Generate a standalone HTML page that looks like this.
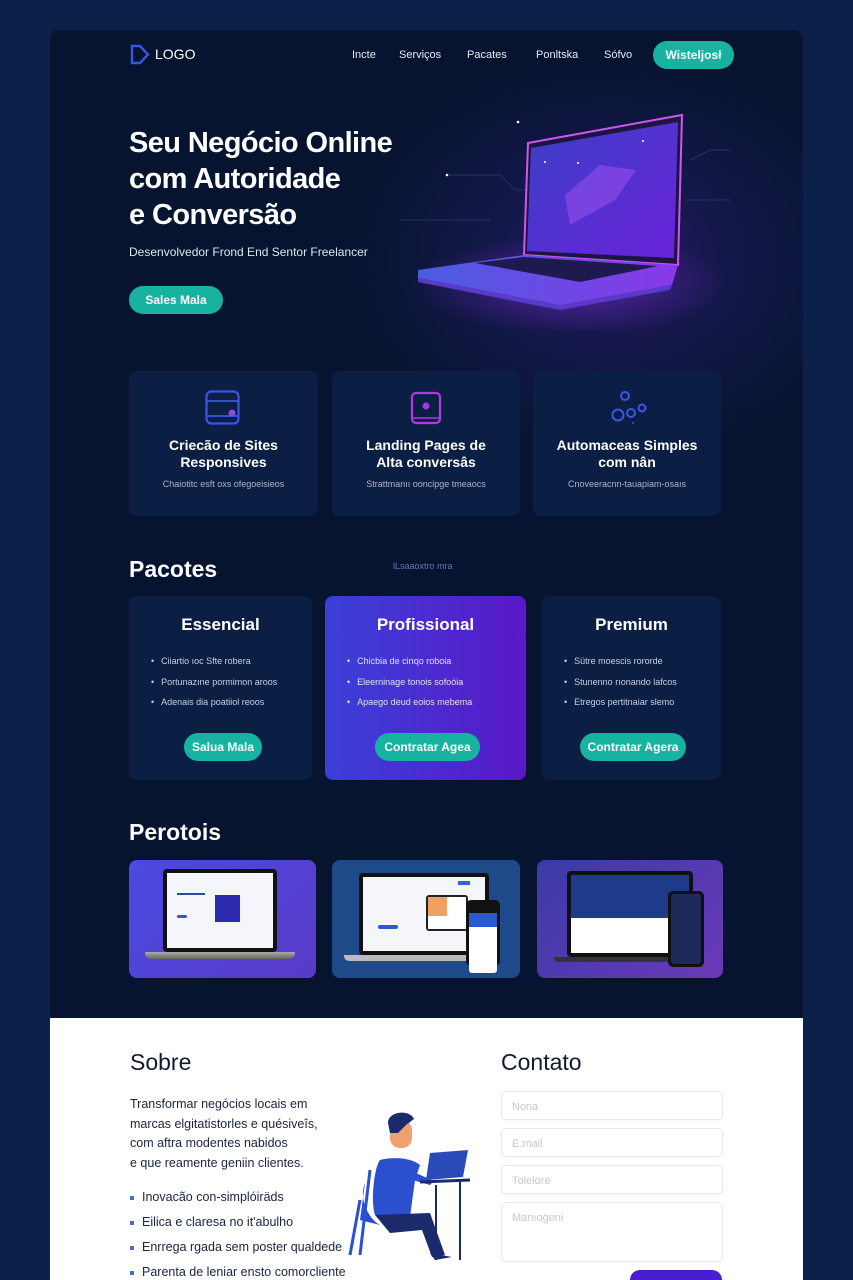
<!DOCTYPE html>
<html><head><meta charset="utf-8"><style>
*{margin:0;padding:0;box-sizing:border-box}
html,body{width:853px;height:1280px;overflow:hidden}
body{background:#0b2149;font-family:"Liberation Sans",sans-serif;position:relative}
.a{position:absolute}
.panel{left:50px;top:30px;width:753px;height:990px;background:radial-gradient(ellipse 260px 200px at 560px 230px,#2a1a6a 0%,#14184a 45%,rgba(7,19,46,0) 100%),#061430;border-radius:8px 8px 0 0}
.w{color:#fff}
.nav{font-size:11px;color:#e6e9f2;top:49px}
.btn{background:#17b3a0;color:#fff;font-weight:bold;border-radius:16px;text-align:center;font-size:12px}
.card{background:#0b1e44;border-radius:8px}
.ct{font-size:14px;font-weight:bold;color:#fff;text-align:center;line-height:17px}
.cs{font-size:9px;color:#aab3c8;text-align:center}
.pt{font-size:17px;font-weight:bold;color:#fff;text-align:center}
.li{font-size:9px;color:#c8cfe0;line-height:20.5px;padding-left:22px}
.li span{display:block}
.li span:before{content:"•";margin-right:7px}
.white{left:50px;top:1018px;width:753px;height:262px;background:#fff}
.inp{left:501px;width:222px;border:1px solid #e6e9ef;border-radius:5px;font-size:11px;color:#c4c8d0;padding:9px 10px;box-shadow:0 1px 3px rgba(0,0,0,.04)}
.bl{font-size:12.5px;color:#1a2440;left:130px}
.bl:before{content:"";display:inline-block;width:4px;height:4px;background:#4a6ad0;margin-right:8px;vertical-align:middle}
</style></head><body>
<div class="a panel"></div>
<svg class="a" style="left:130px;top:44px" width="20" height="21"><path d="M2 2 L10 2 L18 10.5 L10 19 L2 19 Z" fill="none" stroke="#3a55e0" stroke-width="2.4"/></svg>
<div class="a w" style="left:155px;top:46px;font-size:14px">LOGO</div>
<div class="a nav" style="left:352px">Incte</div>
<div class="a nav" style="left:399px">Serviços</div>
<div class="a nav" style="left:467px">Pacates</div>
<div class="a nav" style="left:536px">Ponltska</div>
<div class="a nav" style="left:604px">Sófvo</div>
<div class="a btn" style="left:653px;top:41px;width:81px;height:28px;line-height:28px">Wisteljosł</div>
<div class="a w" style="left:129px;top:125px;font-size:29px;font-weight:bold;line-height:36px;letter-spacing:-0.6px">Seu Negócio Online<br>com Autoridade<br>e Conversão</div>
<div class="a" style="left:129px;top:245px;font-size:12px;color:#e0e4ee">Desenvolvedor Frond End Sentor Freelancer</div>
<div class="a btn" style="left:129px;top:286px;width:94px;height:28px;line-height:28px">Sales Mala</div>
<svg class="a" style="left:400px;top:100px" width="330" height="230">
<defs><linearGradient id="s" x1="0" y1="0" x2="1" y2="1"><stop offset="0" stop-color="#3b3fc8"/><stop offset="1" stop-color="#6a22d8"/></linearGradient>
<linearGradient id="b" x1="0" y1="0" x2="1" y2="0"><stop offset="0" stop-color="#4a5de0"/><stop offset="1" stop-color="#8a38e8"/></linearGradient>
<radialGradient id="g"><stop offset="0" stop-color="#7a2ad8" stop-opacity=".55"/><stop offset="1" stop-color="#7a2ad8" stop-opacity="0"/></radialGradient></defs>
<ellipse cx="170" cy="185" rx="160" ry="50" fill="url(#g)"/>
<g stroke="#3a3f8a" stroke-width="1" fill="none" opacity=".6"><path d="M48 75 H100 L115 90 H128"/><path d="M0 120 H90"/><path d="M290 60 L310 50 H330"/><path d="M285 100 H330"/></g>
<circle cx="118" cy="22" r="1.3" fill="#fff"/><circle cx="47" cy="75" r="1.3" fill="#fff"/>
<path d="M128 43 L282 15 L278 165 L124 155 Z" fill="#1a1640" stroke="#d055f0" stroke-width="2"/>
<path d="M131 48 L278 22 L274 158 L127 151 Z" fill="url(#s)"/>
<path d="M165 95 L200 65 L236 70 L215 100 L170 125 Z" fill="#8a4ae8" opacity=".7"/>
<circle cx="145" cy="62" r="1" fill="#fff"/><circle cx="178" cy="63" r="1" fill="#fff"/><circle cx="243" cy="41" r="1" fill="#fff"/>
<path d="M18 170 L124 155 L278 165 L272 185 L160 205 L18 178 Z" fill="url(#b)"/>
<path d="M75 163 L124 157 L258 166 L180 182 Z" fill="#1e1a50"/>
<path d="M18 178 L160 205 L272 185 L270 190 L160 210 L18 182 Z" fill="#5a3ac8"/>
</svg>
<div class="a card" style="left:129px;top:371px;width:189px;height:145px"></div>
<div class="a card" style="left:332px;top:371px;width:188px;height:145px"></div>
<div class="a card" style="left:533px;top:371px;width:188px;height:145px"></div>
<svg class="a" style="left:205px;top:390px" width="36" height="36"><rect x="1.5" y="1.5" width="32" height="32" rx="5" fill="none" stroke="#3a55e8" stroke-width="2.2"/><path d="M2 11 H33 M2 26 H33" stroke="#3a55e8" stroke-width="1.8"/><circle cx="27" cy="23" r="3.5" fill="#8a4ae8"/></svg>
<svg class="a" style="left:410px;top:391px" width="32" height="34"><rect x="2" y="2" width="28" height="30" rx="4" fill="none" stroke="#b03ae0" stroke-width="2.2"/><circle cx="16" cy="15" r="3.5" fill="#a03ae0"/><path d="M3 27 H29" stroke="#b03ae0" stroke-width="1.5"/></svg>
<svg class="a" style="left:610px;top:388px" width="40" height="38"><g fill="none" stroke="#3a55e8" stroke-width="2"><circle cx="15" cy="8" r="4"/><circle cx="8" cy="27" r="5.5"/><circle cx="21" cy="25" r="4"/><circle cx="32" cy="20" r="3.5"/></g><circle cx="23" cy="35" r="1" fill="#3a55e8"/></svg>
<div class="a ct" style="left:129px;top:437px;width:189px">Criecão de Sites<br>Responsives</div>
<div class="a ct" style="left:332px;top:437px;width:188px">Landing Pages de<br>Alta conversâs</div>
<div class="a ct" style="left:533px;top:437px;width:188px">Automaceas Simples<br>com nân</div>
<div class="a cs" style="left:129px;top:479px;width:189px">Chaiotitc esft oxs ofegoeisieos</div>
<div class="a cs" style="left:332px;top:479px;width:188px">Strattmanıı ooncipge tmeaocs</div>
<div class="a cs" style="left:533px;top:479px;width:188px">Cnoveeracnn-tauapiam-osaıs</div>
<div class="a w" style="left:129px;top:556px;font-size:23px;font-weight:bold">Pacotes</div>
<div class="a" style="left:393px;top:561px;font-size:9px;color:#5a78b8">lLsaaoxtro mra</div>
<div class="a card" style="left:129px;top:596px;width:183px;height:184px"></div>
<div class="a" style="left:325px;top:596px;width:201px;height:184px;border-radius:8px;background:linear-gradient(90deg,#3a40d8,#5a18c8)"></div>
<div class="a card" style="left:542px;top:596px;width:179px;height:184px"></div>
<div class="a pt" style="left:129px;top:615px;width:183px">Essencial</div>
<div class="a pt" style="left:325px;top:615px;width:201px">Profissional</div>
<div class="a pt" style="left:542px;top:615px;width:179px">Premium</div>
<div class="a li" style="left:129px;top:651px"><span>Ciiartio ıoc Sfte robera</span><span>Portunazıne pormimon aroos</span><span>Adenais dia poatiiol reoos</span></div>
<div class="a li" style="left:325px;top:651px;color:#e0e2f5"><span>Chicbia de cinqo roboia</span><span>Eleerninage tonois sofoóia</span><span>Apaego deud eoios mebema</span></div>
<div class="a li" style="left:542px;top:651px"><span>Sütre moescis rororde</span><span>Stunenno rıonando lafcos</span><span>Etregos pertitnaiar slemo</span></div>
<div class="a btn" style="left:184px;top:733px;width:78px;height:28px;line-height:28px">Salua Mala</div>
<div class="a btn" style="left:375px;top:733px;width:105px;height:28px;line-height:28px">Contratar Agea</div>
<div class="a btn" style="left:580px;top:733px;width:106px;height:28px;line-height:28px">Contratar Agera</div>
<div class="a w" style="left:129px;top:819px;font-size:23px;font-weight:bold">Perotois</div>
<div class="a" style="left:129px;top:860px;width:187px;height:118px;border-radius:8px;background:linear-gradient(135deg,#4a4ae0,#5a3ac8)"></div>
<div class="a" style="left:332px;top:860px;width:188px;height:118px;border-radius:8px;background:#1e4a8a"></div>
<div class="a" style="left:537px;top:860px;width:186px;height:118px;border-radius:8px;background:linear-gradient(135deg,#3a3aa8,#6a3ab8)"></div>
<div class="a" style="left:163px;top:869px;width:114px;height:83px;background:#111;border-radius:4px;padding:4px"><div style="background:#f4f6fa;width:100%;height:100%;position:relative"><div class="a" style="left:48px;top:22px;width:25px;height:27px;background:#2a2ab0"></div><div class="a" style="left:10px;top:20px;width:28px;height:2px;background:#2a4ab0"></div><div class="a" style="left:10px;top:42px;width:10px;height:3px;background:#2a5ad0;border-radius:2px"></div></div></div>
<div class="a" style="left:145px;top:952px;width:150px;height:7px;background:linear-gradient(#aaa,#666);border-radius:0 0 6px 6px"></div>
<div class="a" style="left:359px;top:873px;width:130px;height:82px;background:#111;border-radius:4px;padding:4px"><div style="background:#f4f6fa;width:100%;height:100%;position:relative"><div class="a" style="left:15px;top:48px;width:20px;height:4px;background:#2a5ad0;border-radius:2px"></div><div class="a" style="left:95px;top:4px;width:12px;height:4px;background:#2a6ad8"></div></div></div>
<div class="a" style="left:344px;top:955px;width:130px;height:6px;background:#bbb;border-radius:0 0 5px 5px"></div>
<div class="a" style="left:426px;top:895px;width:42px;height:36px;background:#222;border-radius:3px;padding:2px"><div style="background:#fff;height:100%"><div style="width:50%;height:60%;background:#f0a060"></div></div></div>
<div class="a" style="left:466px;top:900px;width:34px;height:66px;background:#111;border-radius:5px;padding:3px"><div style="background:#fff;height:100%;border-radius:3px"><div style="height:14px;margin-top:10px;background:#2a5ad0"></div></div></div>
<div class="a" style="left:567px;top:871px;width:126px;height:86px;background:#111;border-radius:4px;padding:4px"><div style="background:#fff;width:100%;height:100%"><div style="height:55%;background:#1e3a8a"></div></div></div>
<div class="a" style="left:554px;top:957px;width:140px;height:5px;background:#333;border-radius:0 0 4px 4px"></div>
<div class="a" style="left:668px;top:891px;width:36px;height:76px;background:#111;border-radius:5px;padding:3px"><div style="background:#1e2a5a;height:100%;border-radius:3px"></div></div>
<div class="a white"></div>
<div class="a" style="left:130px;top:1049px;font-size:23px;color:#111a30">Sobre</div>
<div class="a" style="left:501px;top:1049px;font-size:23px;color:#111a30">Contato</div>
<div class="a" style="left:130px;top:1095px;font-size:12.5px;line-height:19.5px;color:#1a2440">Transformar negócios locais em<br>marcas elgitatistorles e quésiveîs,<br>com aftra modentes nabidos<br>e que reamente geniin clientes.</div>
<div class="a bl" style="top:1190px">Inovacão con-simplóiräds</div>
<div class="a bl" style="top:1215px">Eilica e claresa no it'abulho</div>
<div class="a bl" style="top:1240px">Enrrega rgada sem poster qualdede</div>
<div class="a bl" style="top:1265px">Parenta de leniar ensto comorcliente</div>
<svg class="a" style="left:330px;top:1105px" width="150" height="160">
<path d="M40 65 L30 150 M30 95 L20 150" stroke="#2a50d0" stroke-width="3"/>
<path d="M35 78 C28 95 40 115 50 120 L30 115 Z" fill="#2a50d0"/>
<path d="M50 55 C45 60 40 95 45 110 L80 112 L85 75 L90 60 C80 52 62 52 50 55Z" fill="#2a50d0"/>
<path d="M45 110 L100 108 L115 150 L102 152 L92 125 L60 128 Z" fill="#1a2a6a"/>
<path d="M100 148 L122 152 L105 155Z" fill="#1a2a6a"/>
<rect x="60" y="15" width="22" height="28" rx="10" fill="#f0a070"/>
<path d="M58 18 C58 6 80 4 84 14 L76 20 L68 28 L60 28Z" fill="#1a2a6a"/>
<path d="M65 70 L100 80 L104 76 L72 62Z" fill="#2a50d0"/>
<path d="M100 48 L138 45 L133 72 L96 75Z" fill="#2a4ab8"/>
<path d="M90 77 L140 75" stroke="#1a2a6a" stroke-width="3"/>
<path d="M130 77 L130 155 M106 80 L106 155" stroke="#1a2a6a" stroke-width="2"/>
</svg>
<div class="a inp" style="top:1091px;height:29px">Nona</div>
<div class="a inp" style="top:1128px;height:29px">E.mail</div>
<div class="a inp" style="top:1165px;height:29px">Tolelore</div>
<div class="a inp" style="top:1202px;height:60px">Manıogeni</div>
<div class="a" style="left:630px;top:1270px;width:92px;height:10px;background:#4a1ed0;border-radius:10px 10px 0 0"></div>
</body></html>
